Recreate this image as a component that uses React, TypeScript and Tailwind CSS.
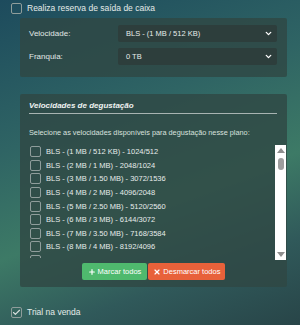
import { Check, Plus, X, ChevronDown } from 'lucide-react';

/* ---------- DADOS ---------- */
const speeds = [
  'BLS - (1 MB / 512 KB) - 1024/512',
  'BLS - (2 MB / 1 MB) - 2048/1024',
  'BLS - (3 MB / 1.50 MB) - 3072/1536',
  'BLS - (4 MB / 2 MB) - 4096/2048',
  'BLS - (5 MB / 2.50 MB) - 5120/2560',
  'BLS - (6 MB / 3 MB) - 6144/3072',
  'BLS - (7 MB / 3.50 MB) - 7168/3584',
  'BLS - (8 MB / 4 MB) - 8192/4096',
  'BLS - (9 MB / 4.50 MB) - 9216/4608',
];

/* ---------- UI ---------- */
const Box = ({ checked = false }: { checked?: boolean }) => (
  <span className="w-[11px] h-[11px] shrink-0 rounded-[2px] border border-[#8f9d9b] flex items-center justify-center">
    {checked && <Check className="w-[9px] h-[9px] text-[#d8e0de]" strokeWidth={3} />}
  </span>
);

const FakeSelect = ({ value }: { value: string }) => (
  <div className="w-[159px] h-[17px] bg-[#2d3e3c] rounded-[2px] flex items-center justify-between pl-[8px] pr-[4px]">
    <span className="text-[7.5px] text-[#e6ecea]">{value}</span>
    <ChevronDown className="w-[9px] h-[9px] text-white" strokeWidth={3.5} />
  </div>
);

export default function App() {
  return (
    <main
      className="w-[300px] h-[325px] overflow-hidden bg-[linear-gradient(160deg,#1d4b5d_0%,#2f6464_35%,#3d7a66_60%,#30595a_80%,#284548_100%)] text-[#e1e8e6]"
      style={{ fontFamily: '"Liberation Sans", Arial, sans-serif' }}
    >
      {/* reserva */}
      <div className="h-[14px] pl-[11px] pt-[2px] flex items-center gap-[5px]">
        <Box />
        <span className="text-[8.5px] text-[#e4ebe9]">Realiza reserva de saída de caixa</span>
      </div>

      {/* velocidade / franquia */}
      <section className="mt-[4px] ml-[20px] w-[267px] h-[59px] bg-[#2f4744]/80 rounded-[2px] pl-[9px] pr-[10px] pt-[7px] space-y-[6px]">
        <div className="flex items-center justify-between">
          <span className="text-[8px]">Velocidade:</span>
          <FakeSelect value="BLS - (1 MB / 512 KB)" />
        </div>
        <div className="flex items-center justify-between">
          <span className="text-[8px]">Franquia:</span>
          <FakeSelect value="0 TB" />
        </div>
      </section>

      {/* degustação */}
      <section className="mt-[17px] ml-[20px] w-[267px] h-[193px] bg-[#2f4744]/80 rounded-[2px] pl-[9px] pr-[1px] pt-[6px]">
        <h3 className="mr-[9px] text-[8px] leading-[11px] font-bold italic text-[#eef2f1] pb-[2px] border-b border-[#a8b4b2]">
          Velocidades de degustação
        </h3>
        <p className="mt-[14px] text-[7.3px] leading-[10px] text-[#d9e1df]">
          Selecione as velocidades disponíveis para degustação nesse plano:
        </p>

        <div className="mt-[7px] h-[115px] flex items-start">
          <ul className="flex-1 h-[113px] overflow-hidden">
            {speeds.map((s) => (
              <li key={s} className="h-[13.6px] flex items-center gap-[5px] pl-[1px]">
                <Box />
                <span className="text-[7.5px] text-[#e6ecea]">{s}</span>
              </li>
            ))}
          </ul>
          <div className="w-[11px] h-[115px] bg-white flex flex-col items-center justify-between py-[3px]">
            <div className="flex flex-col items-center gap-[5px]">
              <span className="w-0 h-0 border-l-[4px] border-r-[4px] border-b-[5px] border-l-transparent border-r-transparent border-b-[#8f8f8f]" />
              <span className="w-[6px] h-[12px] rounded-full bg-[#9d9d9d]" />
            </div>
            <span className="w-0 h-0 border-l-[4px] border-r-[4px] border-t-[5px] border-l-transparent border-r-transparent border-t-[#8f8f8f]" />
          </div>
        </div>

        <div className="mt-[3px] flex justify-center gap-[1px] pr-[8px]">
          <button className="h-[17px] px-[6px] bg-[#4fb96e] rounded-[2px] flex items-center gap-[2px] text-[7.5px] text-white">
            <Plus className="w-[8px] h-[8px]" strokeWidth={3.5} />
            Marcar todos
          </button>
          <button className="h-[17px] px-[5px] bg-[#e8613a] rounded-[2px] flex items-center gap-[2px] text-[7.5px] text-white">
            <X className="w-[8px] h-[8px]" strokeWidth={3.5} />
            Desmarcar todos
          </button>
        </div>
      </section>

      {/* trial */}
      <div className="mt-[19px] pl-[11px] flex items-center gap-[5px]">
        <Box checked />
        <span className="text-[8.5px] text-[#e4ebe9]">Trial na venda</span>
      </div>
    </main>
  );
}
